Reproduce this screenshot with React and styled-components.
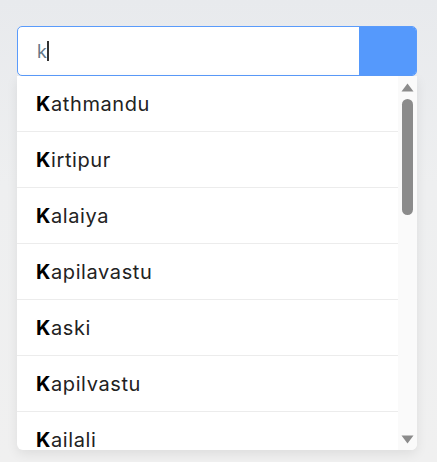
import styled, { createGlobalStyle } from "styled-components";

const GlobalStyle = createGlobalStyle`
  html, body {
    margin: 0;
    height: 100%;
  }
  body {
    background: linear-gradient(180deg, #e8eaed 0%, #eeeff0 40%, #f0f0f0 100%);
    font-family: "Inter", "Noto Sans", sans-serif;
  }
`;

const Page = styled.div`
  padding: 26px 20px 0 17px;
`;

const SearchBox = styled.div`
  width: 400px;
`;

const InputRow = styled.div`
  display: flex;
  height: 50px;
  box-sizing: border-box;
  border: 1px solid #5a9bfb;
  border-radius: 5px;
  overflow: hidden;
  background: #fff;
`;

const InputField = styled.div`
  flex: 1;
  display: flex;
  align-items: center;
  padding-left: 19px;
  font-size: 18px;
  color: #667788;
`;

const Caret = styled.span`
  display: inline-block;
  width: 2px;
  height: 20px;
  background: #333;
`;

const SearchButton = styled.button`
  width: 57px;
  border: none;
  background: #5599fc;
  cursor: pointer;
`;

const Dropdown = styled.div`
  display: flex;
  height: 374px;
  background: #fff;
  border-radius: 0 0 6px 6px;
  overflow: hidden;
  box-shadow: 0 4px 12px rgba(0, 0, 0, 0.08);
`;

const List = styled.ul`
  flex: 1;
  list-style: none;
  margin: 0;
  padding: 0;
  overflow: hidden;
`;

const Item = styled.li`
  height: 55px;
  display: flex;
  align-items: center;
  padding-left: 19px;
  border-bottom: 1px solid #ececec;
  font-size: 20px;
  letter-spacing: 0.6px;
  color: #222;
  cursor: pointer;

  b {
    color: #000;
    font-weight: 700;
  }
`;

const ScrollTrack = styled.div`
  width: 19px;
  background: #fafafa;
  display: flex;
  flex-direction: column;
  align-items: center;
  padding: 7px 0 6px;
  box-sizing: border-box;
`;

const Arrow = styled.svg`
  width: 13px;
  height: 9px;
  flex: none;
`;

const ThumbArea = styled.div`
  flex: 1;
  width: 100%;
  display: flex;
  justify-content: center;
  padding-top: 7px;
`;

const Thumb = styled.div`
  width: 11px;
  height: 116px;
  border-radius: 6px;
  background: #8b8b8b;
`;

const places = [
  "Kathmandu",
  "Kirtipur",
  "Kalaiya",
  "Kapilavastu",
  "Kaski",
  "Kapilvastu",
  "Kailali",
];

export default function App() {
  return (
    <>
      <GlobalStyle />
      <Page>
        <SearchBox>
          <InputRow>
            <InputField>
              <span>k</span>
              <Caret />
            </InputField>
            <SearchButton aria-label="search" />
          </InputRow>
          <Dropdown>
            <List>
              {places.map((p) => (
                <Item key={p}>
                  <b>{p[0]}</b>
                  {p.slice(1)}
                </Item>
              ))}
            </List>
            <ScrollTrack>
              <Arrow viewBox="0 0 13 9">
                <path d="M6.5 0.5 L12.5 8.5 L0.5 8.5 Z" fill="#8b8b8b" />
              </Arrow>
              <ThumbArea>
                <Thumb />
              </ThumbArea>
              <Arrow viewBox="0 0 13 9">
                <path d="M0.5 0.5 L12.5 0.5 L6.5 8.5 Z" fill="#8b8b8b" />
              </Arrow>
            </ScrollTrack>
          </Dropdown>
        </SearchBox>
      </Page>
    </>
  );
}
